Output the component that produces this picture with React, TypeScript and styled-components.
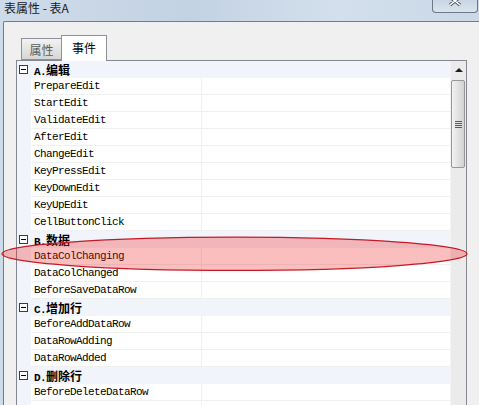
import React from 'react';
import styled, { createGlobalStyle } from 'styled-components';

const sections = [
    { key: 'A.', title: '编辑', items: ['PrepareEdit', 'StartEdit', 'ValidateEdit', 'AfterEdit', 'ChangeEdit', 'KeyPressEdit', 'KeyDownEdit', 'KeyUpEdit', 'CellButtonClick'] },
    { key: 'B.', title: '数据', items: ['DataColChanging', 'DataColChanged', 'BeforeSaveDataRow'] },
    { key: 'C.', title: '增加行', items: ['BeforeAddDataRow', 'DataRowAdding', 'DataRowAdded'] },
    { key: 'D.', title: '删除行', items: ['BeforeDeleteDataRow', ''] },
];

const App = (): JSX.Element => {
    return (
        <>
            <GlobalStyle />
            <Window>

                <TitleBar>
                    <Title>表属性 - 表A</Title>
                    <CloseButton>
                        <svg width="14" height="12" viewBox="0 0 14 12">
                            <path d="M2 -3 L7 1 L12 -3 M2 5 L7 1 L12 5" stroke="#4a5565" strokeWidth="3.4" fill="none" />
                            <path d="M2 -3 L7 1 L12 -3 M2 5 L7 1 L12 5" stroke="#ffffff" strokeWidth="1.6" fill="none" />
                        </svg>
                    </CloseButton>
                </TitleBar>

                <Client>
                    <TabStrip>
                        <Tab>属性</Tab>
                        <Tab $active>事件</Tab>
                    </TabStrip>

                    <Grid>
                        <Rows>
                            {sections.map((section) => (
                                <React.Fragment key={section.key}>
                                    <CategoryRow>
                                        <Gutter>
                                            <Toggle />
                                        </Gutter>
                                        <CategoryLabel>
                                            <Key>{section.key}</Key>
                                            {section.title}
                                        </CategoryLabel>
                                    </CategoryRow>
                                    {section.items.map((item, i) => (
                                        <ItemRow key={item + i}>
                                            <Gutter />
                                            <NameCell>{item}</NameCell>
                                            <ValueCell />
                                        </ItemRow>
                                    ))}
                                </React.Fragment>
                            ))}
                        </Rows>

                        <ScrollBar>
                            <ArrowButton>
                                <UpArrow />
                            </ArrowButton>
                            <Thumb>
                                <Grip />
                            </Thumb>
                            <Track />
                            <ArrowButton>
                                <DownArrow />
                            </ArrowButton>
                        </ScrollBar>
                    </Grid>
                </Client>

                <Highlight viewBox="0 0 479 405">
                    <ellipse cx="234.5" cy="253.8" rx="232.5" ry="16.6" fill="rgba(240, 40, 40, 0.3)" stroke="#c41a24" strokeWidth="1.2" />
                </Highlight>

            </Window>
        </>
    )
}


const GlobalStyle = createGlobalStyle`
    html, body {
        margin: 0;
        padding: 0;
        background: #f0f0f0;
    }
`

const Window = styled.div`
    position: relative;
    width: 479px;
    height: 405px;
    overflow: hidden;
    display: flex;
    flex-direction: column;
    background: linear-gradient(to right, #cedbe9, #c3d2e3 40%, #d3dfec 70%, #cad8e7);
`

const TitleBar = styled.div`
    height: 21px;
    flex-shrink: 0;
    display: flex;
    justify-content: space-between;
    align-items: flex-start;
    padding-left: 4px;
`

const Title = styled.span`
    font-family: "Noto Sans CJK SC", sans-serif;
    font-size: 12px;
    line-height: 16px;
    color: #1b1b1b;
`

const CloseButton = styled.div`
    width: 44px;
    height: 12px;
    margin-right: 1px;
    display: flex;
    justify-content: center;
    align-items: flex-start;
    border: 1px solid #6b7889;
    border-top: none;
    border-radius: 0 0 4px 4px;
    background: linear-gradient(#c9d5e2, #dbe4ee);
`

const Client = styled.div`
    flex: 1;
    min-height: 0;
    margin-left: 3px;
    border-left: 1px solid #6e7d8f;
    border-top: 1px solid #6e7d8f;
    border-top-left-radius: 2px;
    background: #f0f0f0;
    padding: 13px 0 0 12px;
    display: flex;
    flex-direction: column;
    overflow: hidden;
`

const TabStrip = styled.div`
    height: 25px;
    flex-shrink: 0;
    display: flex;
    align-items: flex-end;
    padding-left: 5px;
`

const Tab = styled.div<{ $active?: boolean }>`
    position: relative;
    z-index: 1;
    box-sizing: border-box;
    width: ${(p) => (p.$active ? '46px' : '40px')};
    height: ${(p) => (p.$active ? '26px' : '22px')};
    margin-bottom: ${(p) => (p.$active ? '-1px' : '0')};
    padding-top: ${(p) => (p.$active ? '4px' : '3px')};
    text-align: center;
    font-family: "Noto Sans CJK SC", sans-serif;
    font-size: 12px;
    line-height: 16px;
    color: ${(p) => (p.$active ? '#000000' : '#5c5c5c')};
    border: 1px solid #8e9199;
    border-bottom: ${(p) => (p.$active ? 'none' : '1px solid #8e9199')};
    border-right: ${(p) => (p.$active ? '1px solid #8e9199' : 'none')};
    background: ${(p) => (p.$active ? '#ffffff' : 'linear-gradient(#f3f3f3, #e4e4e4 50%, #d6d6d6)')};
`

const Grid = styled.div`
    box-sizing: border-box;
    width: 451px;
    flex: 1;
    display: flex;
    border: 1px solid #828790;
    background: #ffffff;
`

const Rows = styled.div`
    width: 433px;
    display: flex;
    flex-direction: column;
`

const CategoryRow = styled.div`
    height: 17px;
    flex-shrink: 0;
    display: flex;
    background: #f1f4fa;
`

const ItemRow = styled.div`
    height: 17px;
    flex-shrink: 0;
    display: flex;
`

const Gutter = styled.div`
    width: 14px;
    flex-shrink: 0;
    background: #f1f4fa;
    display: flex;
    align-items: center;
    padding-left: 2px;
    box-sizing: border-box;
`

const Toggle = styled.div`
    position: relative;
    box-sizing: border-box;
    width: 9px;
    height: 9px;
    border: 1px solid #3c3c3c;
    background: #ffffff;

    &::after {
        content: '';
        position: absolute;
        left: 1px;
        top: 3px;
        width: 5px;
        height: 1px;
        background: #000000;
    }
`

const CategoryLabel = styled.div`
    flex: 1;
    padding-left: 3px;
    font-family: "Noto Sans CJK SC", sans-serif;
    font-weight: bold;
    font-size: 12px;
    line-height: 17px;
    color: #000000;
`

const Key = styled.span`
    font-family: "Liberation Mono", monospace;
    font-size: 11px;
    letter-spacing: -0.6px;
`

const NameCell = styled.div`
    box-sizing: border-box;
    width: 171px;
    flex-shrink: 0;
    padding: 1px 0 0 3px;
    border-right: 1px solid #f0f0f0;
    border-bottom: 1px solid #f0f0f0;
    font-family: "Liberation Mono", monospace;
    font-size: 11px;
    letter-spacing: -0.6px;
    line-height: 15px;
    color: #000000;
    white-space: nowrap;
`

const ValueCell = styled.div`
    flex: 1;
    border-bottom: 1px solid #f0f0f0;
`

const ScrollBar = styled.div`
    width: 16px;
    flex-shrink: 0;
    display: flex;
    flex-direction: column;
    background: #ebebeb;
    border-left: 1px solid #f4f4f4;
    box-sizing: border-box;
`

const ArrowButton = styled.div`
    height: 17px;
    flex-shrink: 0;
    display: flex;
    align-items: center;
    justify-content: center;
`

const UpArrow = styled.div`
    width: 0;
    height: 0;
    border-left: 4px solid transparent;
    border-right: 4px solid transparent;
    border-bottom: 4px solid #1e1e1e;
`

const DownArrow = styled.div`
    width: 0;
    height: 0;
    border-left: 4px solid transparent;
    border-right: 4px solid transparent;
    border-top: 4px solid #1e1e1e;
`

const Thumb = styled.div`
    box-sizing: border-box;
    height: 88px;
    margin: 2px 1px 0 0;
    flex-shrink: 0;
    display: flex;
    align-items: center;
    justify-content: center;
    border: 1px solid #969696;
    border-radius: 2px;
    background: linear-gradient(to right, #f2f2f2, #e2e2e2 50%, #d2d2d2);
`

const Grip = styled.div`
    width: 7px;
    height: 7px;
    background: repeating-linear-gradient(#5a5a5a 0 1px, transparent 1px 2px);
`

const Track = styled.div`
    flex: 1;
`

const Highlight = styled.svg`
    position: absolute;
    left: 0;
    top: 0;
    width: 479px;
    height: 405px;
    pointer-events: none;
`

export default App;
